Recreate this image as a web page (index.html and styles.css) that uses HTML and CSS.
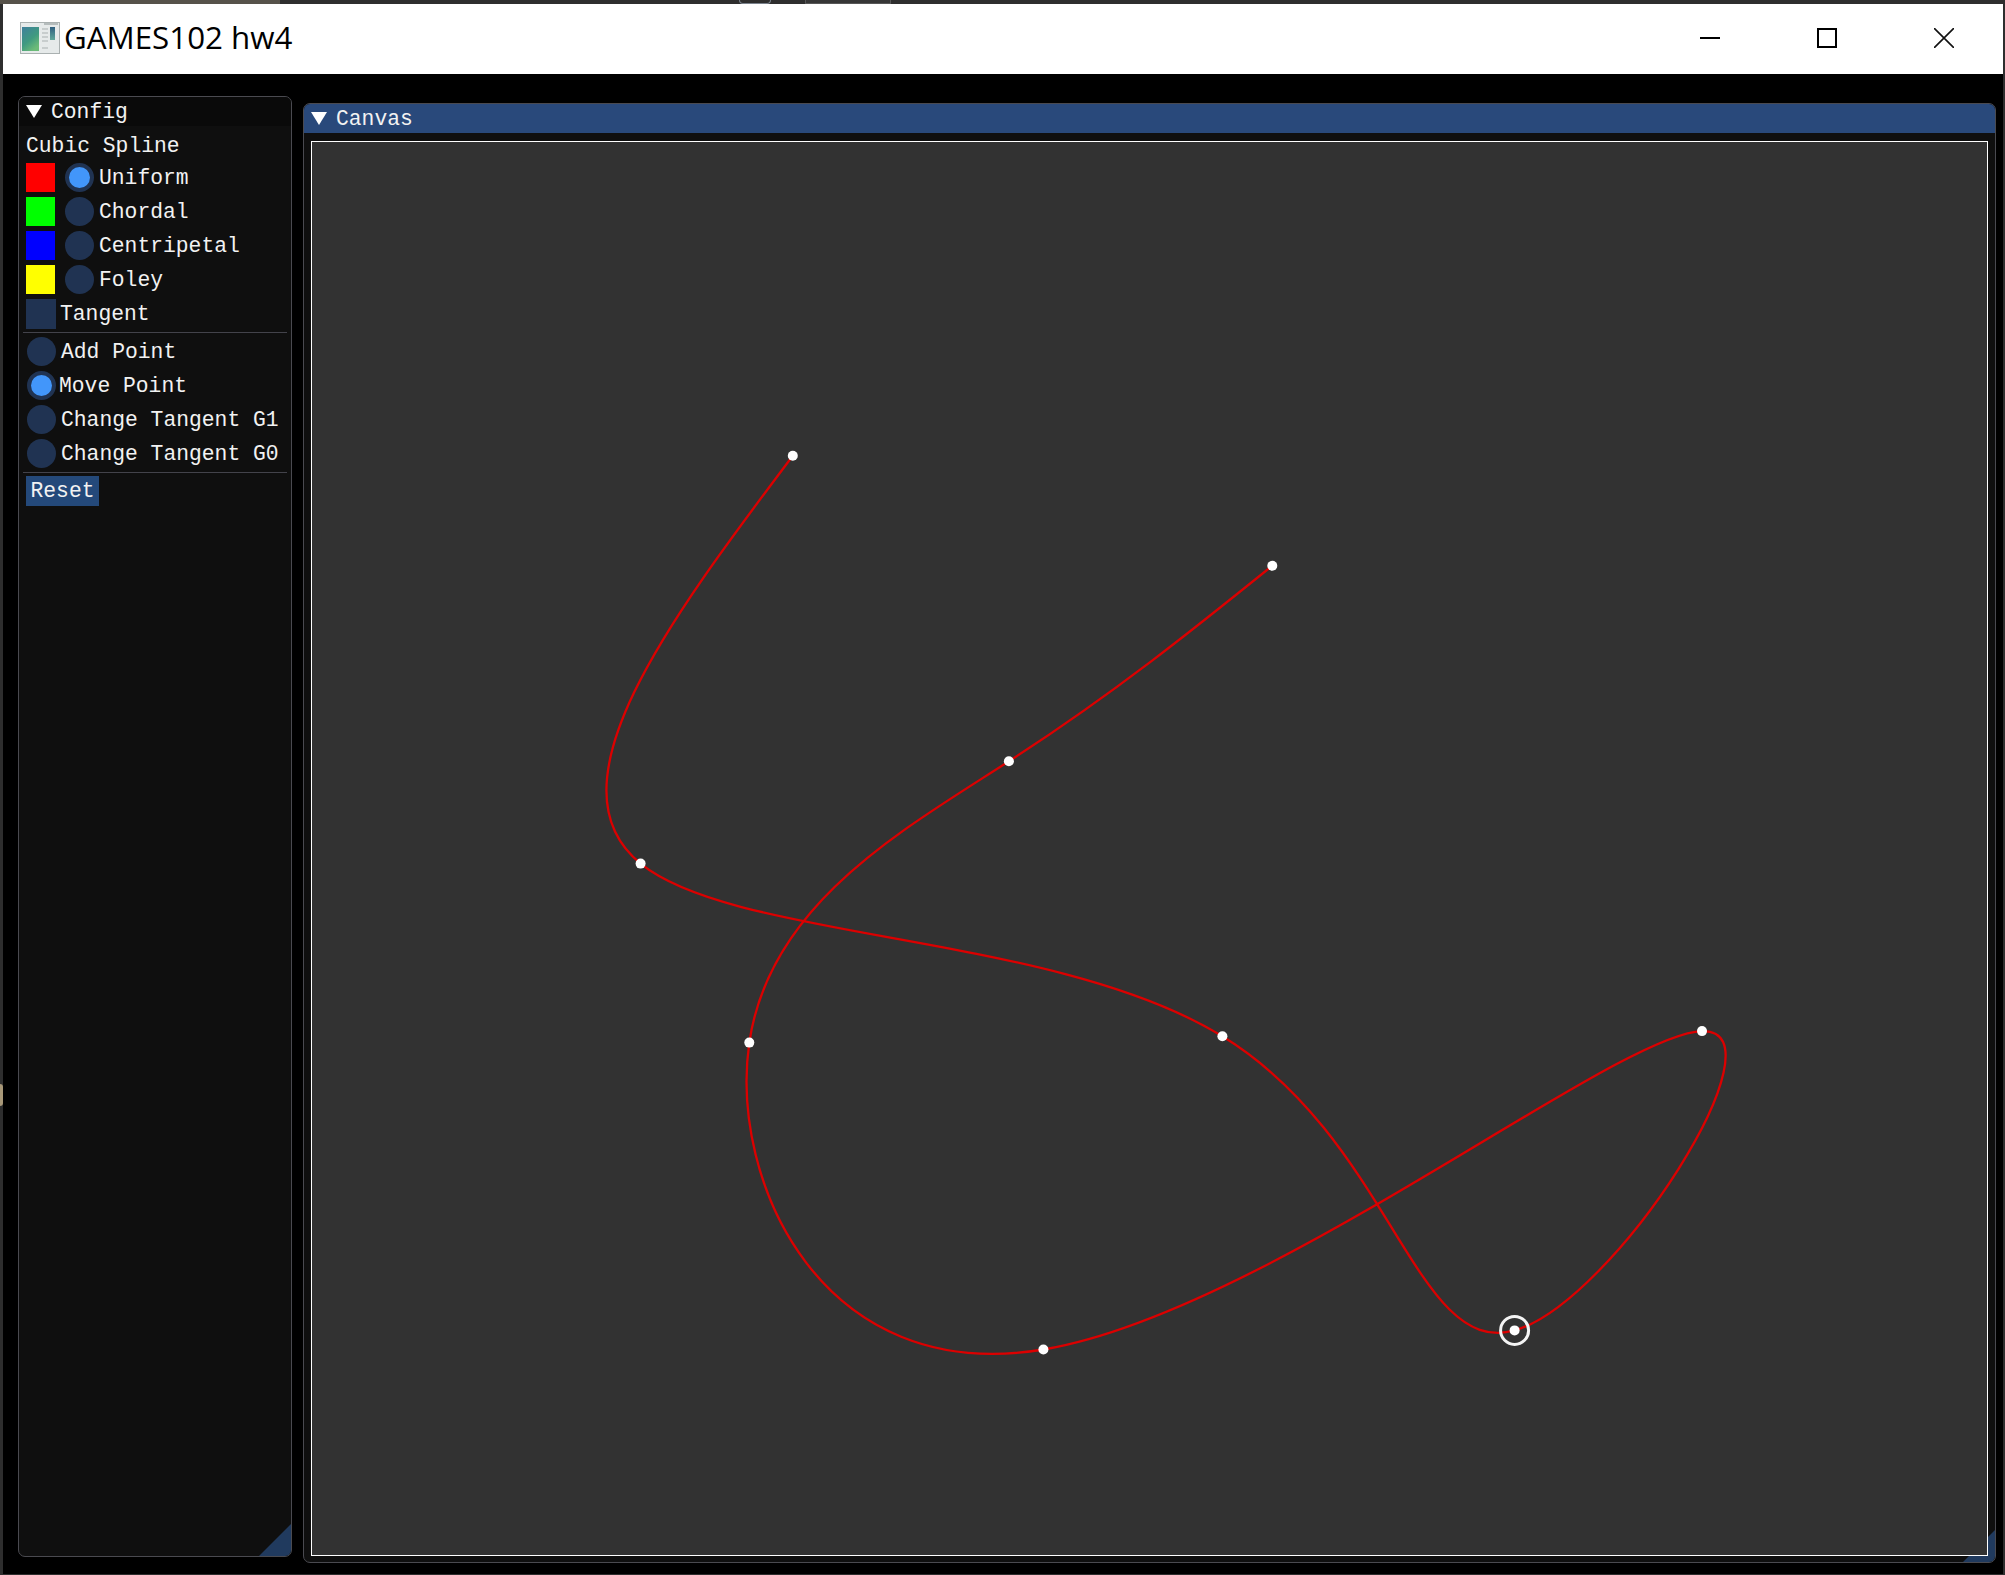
FILE: index.html
```html
<!DOCTYPE html>
<html>

<head>
    <meta charset="UTF-8">
    <title>GAMES102 hw4</title>
    <link rel="stylesheet" href="styles.css">
</head>

<body>
    <!-- Restos da area de trabalho atras da janela -->
    <span class="desk-top-left"></span>
    <span class="desk-arc"></span>
    <span class="desk-box"></span>
    <span class="desk-blob"></span>

    <div class="window">
        <!-- Barra de titulo -->
        <div class="titlebar">
            <svg class="app-icon" viewBox="0 0 40 32">
                <defs>
                    <linearGradient id="iconPanel" x1="0" y1="0" x2="0.6" y2="1">
                        <stop offset="0" stop-color="#3f7f9c"/>
                        <stop offset="0.6" stop-color="#3f9a80"/>
                        <stop offset="1" stop-color="#6cbb78"/>
                    </linearGradient>
                    <linearGradient id="iconColumn" x1="0" y1="0" x2="0" y2="1">
                        <stop offset="0" stop-color="#2f5f80"/>
                        <stop offset="1" stop-color="#5fa89a"/>
                    </linearGradient>
                </defs>
                <rect x="0.5" y="0.5" width="39" height="31" fill="#e6eaea" stroke="#aab1b1"/>
                <path d="M24 2h14" stroke="#b5bcbc" stroke-width="2"/>
                <rect x="2" y="5" width="17" height="24" fill="url(#iconPanel)"/>
                <rect x="30" y="5" width="5" height="13" fill="url(#iconColumn)"/>
                <path d="M22 7h6M22 11h6M22 15h6M22 19h6M22 26h6" stroke="#a9b0b0"/>
            </svg>
            <span class="app-title">GAMES102 hw4</span>
            <div class="window-buttons">
                <svg viewBox="0 0 20 20"><path d="M0 10h20" stroke="#000" stroke-width="2"/></svg>
                <svg viewBox="0 0 20 20"><rect x="1" y="1" width="18" height="18" fill="none" stroke="#000" stroke-width="2"/></svg>
                <svg viewBox="0 0 20 20"><path d="M0 0L20 20M20 0L0 20" stroke="#111" stroke-width="1.6"/></svg>
            </div>
        </div>

        <div class="content">
            <!-- Painel de configuracao -->
            <div class="panel config">
                <div class="panel-title"><span class="arrow"></span>Config</div>
                <div class="panel-body">
                    <div class="row heading">Cubic Spline</div>
                    <div class="row"><span class="swatch red"></span><span class="radio on"></span><span class="radio-label">Uniform</span></div>
                    <div class="row"><span class="swatch green"></span><span class="radio"></span><span class="radio-label">Chordal</span></div>
                    <div class="row"><span class="swatch blue"></span><span class="radio"></span><span class="radio-label">Centripetal</span></div>
                    <div class="row"><span class="swatch yellow"></span><span class="radio"></span><span class="radio-label">Foley</span></div>
                    <div class="row"><span class="checkbox"></span><span class="check-label">Tangent</span></div>
                    <div class="separator"></div>
                    <div class="row"><span class="radio"></span><span class="mode-label">Add Point</span></div>
                    <div class="row"><span class="radio on"></span><span class="mode-label on">Move Point</span></div>
                    <div class="row"><span class="radio"></span><span class="mode-label">Change Tangent G1</span></div>
                    <div class="row"><span class="radio"></span><span class="mode-label">Change Tangent G0</span></div>
                    <div class="separator"></div>
                    <button class="reset">Reset</button>
                </div>
                <span class="grip"></span>
            </div>

            <!-- Painel do canvas -->
            <div class="panel canvas-panel">
                <div class="panel-title active"><span class="arrow"></span>Canvas</div>
                <div class="canvas">
                    <svg class="plot" viewBox="312 141.5 1675 1413">
                        <path class="curve" d="M792.8 455.2
                            C668.7 620.2 544.6 785.3 640.6 863.1
                            C736.6 940.9 1052.7 931.6 1222.4 1035.8
                            C1392.1 1140 1415.3 1357.9 1514.6 1329.9
                            C1613.9 1301.9 1789.3 1028.1 1702 1030.6
                            C1614.7 1033.1 1264.8 1312 1043.4 1349
                            C822 1386 729.1 1181.3 749.3 1042.1
                            C769.5 902.9 902.9 829.4 1008.9 760.8
                            C1114.9 692.2 1193.6 628.7 1272.3 565.2"/>
                        <circle class="point" cx="792.8" cy="455.2" r="5"/>
                        <circle class="point" cx="640.6" cy="863.1" r="5"/>
                        <circle class="point" cx="1222.4" cy="1035.8" r="5"/>
                        <circle class="point" cx="1514.6" cy="1329.9" r="5"/>
                        <circle class="point" cx="1702" cy="1030.6" r="5"/>
                        <circle class="point" cx="1043.4" cy="1349" r="5"/>
                        <circle class="point" cx="749.3" cy="1042.1" r="5"/>
                        <circle class="point" cx="1008.9" cy="760.8" r="5"/>
                        <circle class="point" cx="1272.3" cy="565.2" r="5"/>
                        <circle class="selected" cx="1514.6" cy="1329.9" r="14"/>
                    </svg>
                </div>
                <span class="grip"></span>
            </div>
        </div>
    </div>
</body>

</html>
```

FILE: styles.css
```css
html,
body {
    margin: 0;
    padding: 0;
    background-color: #2e2e2e;
}

body {
    padding-top: 4px;
}

.desk-top-left {
    position: absolute;
    left: 0;
    top: 0;
    width: 280px;
    height: 4px;
    background-color: #56524a;
}

.desk-arc {
    position: absolute;
    left: 739px;
    top: 0;
    width: 30px;
    height: 3px;
    border: 1px solid #7a828c;
    border-top: none;
    border-radius: 0 0 16px 16px;
}

.desk-box {
    position: absolute;
    left: 805px;
    top: 0;
    width: 84px;
    height: 3px;
    background-color: #363636;
    border: 1px solid #565656;
    border-top: none;
}

.desk-blob {
    position: absolute;
    left: 0;
    top: 1084px;
    width: 3px;
    height: 22px;
    background-color: #a89878;
    border-radius: 0 3px 3px 0;
}

.window {
    position: relative;
    width: 2000px;
    height: 1570px;
    margin-left: 3px;
    background-color: #000;
    overflow: hidden;
}

.titlebar {
    height: 70px;
    background-color: #fff;
    display: flex;
    align-items: center;
    padding-left: 17px;
    box-sizing: border-box;
}

.app-icon {
    width: 40px;
    height: 32px;
    margin-right: 4px;
    margin-bottom: 2px;
}

.app-title {
    font-family: "Open Sans", sans-serif;
    font-size: 31.3px;
    color: #000;
    margin-bottom: 4px;
}

.window-buttons {
    margin-left: auto;
    margin-bottom: 2px;
    display: flex;
    gap: 97px;
    padding-right: 49px;
}

.window-buttons svg {
    width: 20px;
    height: 20px;
    display: block;
}

.content {
    display: flex;
    align-items: flex-start;
    padding: 22px 7px 0 15px;
    gap: 11px;
}

.panel {
    position: relative;
    box-sizing: border-box;
    background-color: #0f0f0f;
    border: 1px solid #4a4a50;
    border-radius: 7px;
    overflow: hidden;
    font-family: "Liberation Mono", monospace;
    font-size: 21.33px;
    color: #f2f2f2;
}

.config {
    width: 274px;
    height: 1461px;
}

.canvas-panel {
    flex: 1;
    height: 1460px;
    margin-top: 7px;
}

.panel-title {
    height: 29px;
    line-height: 31px;
    background-color: #0a0a0a;
    padding-left: 32px;
    position: relative;
}

.panel-title.active {
    line-height: 30px;
    background-color: #29497b;
}

.arrow {
    position: absolute;
    left: 7px;
    top: 8px;
    width: 16px;
    height: 13px;
    background-color: #fff;
    clip-path: polygon(0 0, 100% 0, 50% 100%);
}

.panel-body {
    padding: 7px 7px;
}

.row {
    display: flex;
    align-items: center;
    height: 29px;
    margin-bottom: 5px;
    white-space: pre;
}

.heading {
    height: 26px;
    margin-bottom: 4px;
}

.swatch {
    width: 29px;
    height: 29px;
    margin-right: 9px;
}

.red { background-color: #f00; }
.green { background-color: #0f0; }
.blue { background-color: #00f; }
.yellow { background-color: #ff0; }

.radio {
    width: 29px;
    height: 29px;
    border-radius: 50%;
    background-color: #203352;
    margin-left: 1px;
    box-sizing: border-box;
}

.radio.on {
    background-color: #4296fa;
    border: 4.5px solid #203352;
}

.radio-label {
    margin-left: 5px;
}

.checkbox {
    flex: none;
    width: 30px;
    height: 30px;
    background-color: #203352;
}

.check-label {
    margin-left: 4px;
}

.mode-label {
    margin-left: 5px;
}

.mode-label.on {
    margin-left: 3px;
}

.separator {
    height: 1px;
    background-color: #43434b;
    margin: -1px -3px 4px;
}

.reset {
    display: block;
    width: 73px;
    height: 30px;
    margin-top: -1px;
    padding: 0;
    border: none;
    background-color: #24497a;
    color: #f2f2f2;
    font-family: "Liberation Mono", monospace;
    font-size: 21.33px;
}

.grip {
    position: absolute;
    right: 0;
    bottom: 0;
    width: 32px;
    height: 32px;
    background-color: #203a5e;
    clip-path: polygon(100% 0, 100% 100%, 0 100%);
}

.canvas {
    position: relative;
    z-index: 1;
    box-sizing: border-box;
    margin: 8px 7px 0;
    height: 1415px;
    background-color: #323232;
    border: 1px solid #fff;
}

.plot {
    display: block;
    width: 100%;
    height: 100%;
}

.curve {
    fill: none;
    stroke: #dc0000;
    stroke-width: 2.3;
}

.point {
    fill: #fff;
}

.selected {
    fill: none;
    stroke: #f4f4f4;
    stroke-width: 3;
}
```
